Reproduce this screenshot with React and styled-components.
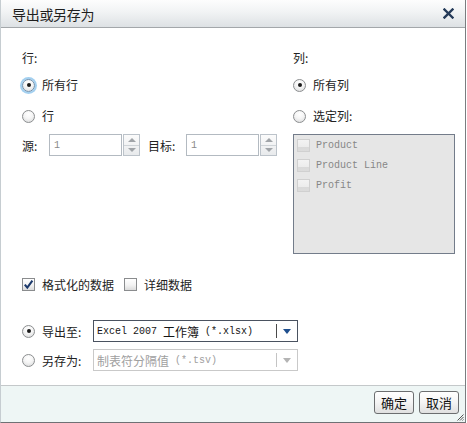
import React from "react";
import styled, { createGlobalStyle, css } from "styled-components";

const Global = createGlobalStyle`
  html, body { margin: 0; padding: 0; background: #ffffff; }
  body { font-family: "Noto Sans CJK SC", "Noto Sans", sans-serif; }
  * { box-sizing: border-box; }
`;

const Dialog = styled.div`
  position: relative;
  width: 466px;
  height: 423px;
  display: flex;
  flex-direction: column;
  border-left: 1px solid #c6cdd1;
  border-right: 1px solid #7a7d80;
  border-bottom: 1px solid #6e7174;
  background: #ffffff;
  color: #222;
  font-size: 12px;
`;

const TitleBar = styled.div`
  height: 28px;
  flex: none;
  display: flex;
  align-items: center;
  justify-content: space-between;
  padding: 0 11px 0 11px;
  background: linear-gradient(#fdfdfd 0%, #f1f3f4 45%, #dde1e4 100%);
  border-bottom: 1px solid #a3a7aa;
`;

const Title = styled.span`
  font-size: 14px;
  line-height: 16px;
  color: #1e1e1e;
  letter-spacing: -0.3px;
`;

const Body = styled.div`
  flex: 1;
  padding: 22px 0 0 21px;
  display: flex;
  flex-direction: column;
`;

const Columns = styled.div`
  display: grid;
  grid-template-columns: 271px 162px;
  align-items: start;
`;

const Col = styled.div`
  display: flex;
  flex-direction: column;
`;

const SectionLabel = styled.div`
  height: 16px;
  line-height: 16px;
`;

const OptionRow = styled.label`
  display: flex;
  align-items: center;
  gap: 7px;
  height: 18px;
  margin-top: ${(p) => p.$mt || 0}px;
  line-height: 16px;
`;

const Radio = styled.span`
  flex: none;
  width: 13px;
  height: 13px;
  border-radius: 50%;
  border: 1px solid #8c8e90;
  background: radial-gradient(circle at 50% 30%, #ffffff 0%, #f5f5f5 45%, #d6d7d8 100%);
  display: inline-flex;
  align-items: center;
  justify-content: center;
  ${(p) =>
    p.$focus &&
    css`
      box-shadow: 0 0 0 2px #a3d0f0;
      border-color: #6d8fae;
    `}
  &::after {
    content: "";
    width: 4px;
    height: 4px;
    border-radius: 50%;
    background: #1b1b1b;
    display: ${(p) => (p.$checked ? "block" : "none")};
  }
`;

const SpinRow = styled.div`
  display: flex;
  align-items: center;
  height: 22px;
  margin-top: 9px;
`;

const FieldLabel = styled.span`
  width: ${(p) => p.$w}px;
  margin-left: ${(p) => p.$ml || 0}px;
  flex: none;
`;

const NumInput = styled.div`
  width: 73px;
  height: 22px;
  border: 1px solid #b3bac1;
  display: flex;
  align-items: center;
  padding-left: 4px;
  font-family: "Liberation Mono", monospace;
  font-size: 10px;
  color: #8a8a8a;
  background: #fff;
`;

const Spinner = styled.div`
  width: 17px;
  height: 22px;
  margin-left: 1px;
  border: 1px solid #bcc3ca;
  display: flex;
  flex-direction: column;
  background: linear-gradient(#fbfbfb, #e8eaec);
`;

const SpinHalf = styled.div`
  flex: 1;
  display: flex;
  align-items: center;
  justify-content: center;
  & + & { border-top: 1px solid #cfd4d8; }
  &::after {
    content: "";
    width: 0;
    height: 0;
    border-left: 4px solid transparent;
    border-right: 4px solid transparent;
    ${(p) =>
      p.$up
        ? css`border-bottom: 4px solid #a0a4a8;`
        : css`border-top: 4px solid #a0a4a8;`}
  }
`;

const ListBox = styled.div`
  margin-top: 9px;
  height: 120px;
  border: 1px solid #737c8a;
  background: #e6e6e6;
  padding: 0 0 0 3px;
  display: flex;
  flex-direction: column;
`;

const ListItem = styled.div`
  height: 20px;
  display: flex;
  align-items: center;
  gap: 6px;
  font-family: "Liberation Mono", monospace;
  font-size: 10px;
  color: #868686;
  white-space: pre;
`;

const Box = styled.span`
  flex: none;
  width: 13px;
  height: 13px;
  border: 1px solid ${(p) => (p.$disabled ? "#d0d0d0" : "#8a8c8e")};
  background: ${(p) =>
    p.$disabled
      ? "linear-gradient(#f3f3f3 0%, #ececec 62%, #d9d9d9 62%, #dcdcdc 100%)"
      : "linear-gradient(#ffffff 0%, #f3f3f3 55%, #dcdcdc 100%)"};
  display: inline-flex;
  align-items: center;
  justify-content: center;
`;

const CheckRow = styled.div`
  display: flex;
  align-items: center;
  height: 16px;
  margin-top: 22px;
`;

const CheckItem = styled.label`
  display: flex;
  align-items: center;
  gap: 7px;
  margin-right: 10px;
`;

const ExportRow = styled.div`
  display: flex;
  align-items: center;
  height: 22px;
  margin-top: ${(p) => p.$mt}px;
`;

const ExportLabel = styled.span`
  width: 51px;
  margin-left: 7px;
  flex: none;
`;

const Select = styled.div`
  width: 205px;
  height: 22px;
  display: flex;
  align-items: center;
  padding-left: 3px;
  border: 1px solid ${(p) => (p.$disabled ? "#c9c9c9" : "#4a5260")};
  color: ${(p) => (p.$disabled ? "#a0a0a0" : "#151515")};
  background: #fff;
`;

const SelectText = styled.div`
  flex: 1;
  white-space: pre;
  display: flex;
  align-items: center;
`;

const Mono = styled.span`
  font-family: "Liberation Mono", monospace;
  font-size: 10px;
`;

const Cjk = styled.span`
  font-family: "Noto Sans CJK SC", sans-serif;
  font-size: 12px;
`;

const Divider = styled.span`
  width: 1px;
  height: 14px;
  background: ${(p) => (p.$disabled ? "#c4c4c4" : "#4a4a4a")};
`;

const Arrow = styled.span`
  width: 20px;
  display: flex;
  justify-content: center;
  &::after {
    content: "";
    border-left: 4px solid transparent;
    border-right: 4px solid transparent;
    border-top: 5px solid ${(p) => (p.$disabled ? "#b4b4b4" : "#1f4f8e")};
  }
`;

const Footer = styled.div`
  position: relative;
  height: 37px;
  flex: none;
  border-top: 1px solid #c4c8ca;
  background: #eef6f5;
  display: flex;
  justify-content: flex-end;
  align-items: flex-start;
  gap: 5px;
  padding: 5px 6px 0 0;
`;

const Button = styled.button`
  width: 40px;
  height: 23px;
  padding: 0;
  border: 1px solid #6c6e70;
  border-radius: 3px;
  background: linear-gradient(#ffffff 0%, #f4f4f4 50%, #e0e0e0 100%);
  font-family: "Noto Sans CJK SC", sans-serif;
  font-size: 13px;
  color: #111;
  line-height: 20px;
`;

const Grip = styled.svg`
  position: absolute;
  right: 1px;
  bottom: 1px;
`;

function CloseIcon() {
  return (
    <svg width="11" height="11" viewBox="0 0 11 11">
      <path d="M1.5 1.5 L9.5 9.5 M9.5 1.5 L1.5 9.5" stroke="#243a58" strokeWidth="2.4" strokeLinecap="square" />
    </svg>
  );
}

function CheckMark() {
  return (
    <svg width="11" height="11" viewBox="0 0 11 11">
      <path d="M1.8 5.6 L4.3 8.6 L9.4 1.6" fill="none" stroke="#1d3a6c" strokeWidth="2.1" />
    </svg>
  );
}

export default function App() {
  return (
    <>
      <Global />
      <Dialog>
        <TitleBar>
          <Title>导出或另存为</Title>
          <CloseIcon />
        </TitleBar>
        <Body>
          <Columns>
            <Col>
              <SectionLabel>行:</SectionLabel>
              <OptionRow $mt={10}>
                <Radio $checked $focus />
                所有行
              </OptionRow>
              <OptionRow $mt={13}>
                <Radio />
                行
              </OptionRow>
              <SpinRow>
                <FieldLabel $w={27}>源:</FieldLabel>
                <NumInput>1</NumInput>
                <Spinner>
                  <SpinHalf $up />
                  <SpinHalf />
                </Spinner>
                <FieldLabel $w={38} $ml={8}>目标:</FieldLabel>
                <NumInput>1</NumInput>
                <Spinner>
                  <SpinHalf $up />
                  <SpinHalf />
                </Spinner>
              </SpinRow>
            </Col>
            <Col>
              <SectionLabel>列:</SectionLabel>
              <OptionRow $mt={10}>
                <Radio $checked />
                所有列
              </OptionRow>
              <OptionRow $mt={13}>
                <Radio />
                选定列:
              </OptionRow>
              <ListBox>
                {["Product", "Product Line", "Profit"].map((n) => (
                  <ListItem key={n}>
                    <Box $disabled />
                    {n}
                  </ListItem>
                ))}
              </ListBox>
            </Col>
          </Columns>
          <CheckRow>
            <CheckItem>
              <Box>
                <CheckMark />
              </Box>
              格式化的数据
            </CheckItem>
            <CheckItem>
              <Box />
              详细数据
            </CheckItem>
          </CheckRow>
          <ExportRow $mt={28}>
            <Radio $checked />
            <ExportLabel>导出至:</ExportLabel>
            <Select>
              <SelectText>
                <Mono>Excel 2007 </Mono>
                <Cjk>工作簿</Cjk>
                <Mono> (*.xlsx)</Mono>
              </SelectText>
              <Divider />
              <Arrow />
            </Select>
          </ExportRow>
          <ExportRow $mt={7}>
            <Radio />
            <ExportLabel>另存为:</ExportLabel>
            <Select $disabled>
              <SelectText>
                <Cjk>制表符分隔值</Cjk>
                <Mono> (*.tsv)</Mono>
              </SelectText>
              <Divider $disabled />
              <Arrow $disabled />
            </Select>
          </ExportRow>
        </Body>
        <Footer>
          <Button>确定</Button>
          <Button>取消</Button>
          <Grip width="7" height="7" viewBox="0 0 7 7">
            <path d="M6.5 0.5 L0.5 6.5 M6.5 3 L3 6.5 M6.5 5.5 L5.5 6.5" stroke="#555" strokeWidth="1" />
          </Grip>
        </Footer>
      </Dialog>
    </>
  );
}
